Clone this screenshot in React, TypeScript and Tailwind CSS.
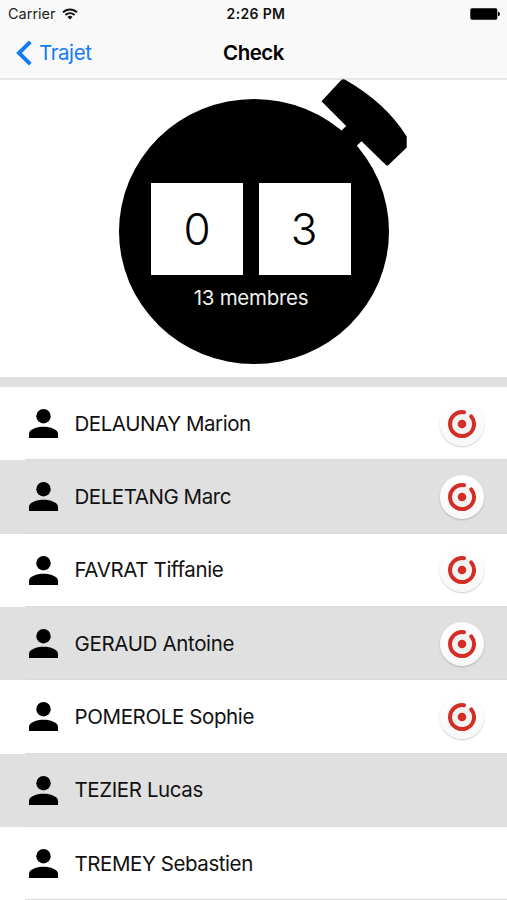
const members = [
  { name: 'DELAUNAY Marion', tracking: 'tracking-[-0.45px]', badge: true },
  { name: 'DELETANG Marc', tracking: 'tracking-[-0.45px]', badge: true },
  { name: 'FAVRAT Tiffanie', tracking: 'tracking-[-0.38px]', badge: true },
  { name: 'GERAUD Antoine', tracking: 'tracking-[-0.35px]', badge: true },
  { name: 'POMEROLE Sophie', tracking: 'tracking-[-0.38px]', badge: true },
  { name: 'TEZIER Lucas', tracking: 'tracking-[-0.4px]', badge: false },
  { name: 'TREMEY Sebastien', tracking: 'tracking-[-0.43px]', badge: false },
];

function StatusBar() {
  return (
    <div className="grid h-[27px] grid-cols-3 items-center pr-[7px] pl-2 text-[#111]">
      <div className="flex items-center gap-[6px]">
        <span className="pt-px text-[14.5px] leading-none text-[#222]">Carrier</span>
        <svg width="16" height="12" viewBox="0 0 16 12" fill="none" stroke="#111" strokeWidth="1.9">
          <path d="M1 4.4 A10 10 0 0 1 15 4.4" />
          <path d="M3.4 7 A6.5 6.5 0 0 1 12.6 7" />
          <path d="M8 11.5 L5.5 9 A3.5 3.5 0 0 1 10.5 9 Z" fill="#111" stroke="none" />
        </svg>
      </div>
      <span className="pl-1 text-center text-[14px] leading-none font-semibold tracking-[0.35px]">2:26 PM</span>
      <svg className="justify-self-end" width="30" height="12" viewBox="0 0 30 12">
        <rect x="0.3" y="0.3" width="27" height="11.4" rx="1.6" />
        <path d="M28 3.8 Q30 4.3 30 6 Q30 7.7 28 8.2Z" />
      </svg>
    </div>
  );
}

function NavBar() {
  return (
    <div className="grid h-[51px] grid-cols-3 items-center px-4 text-[20.5px]">
      <div className="flex items-center gap-[7px] text-[#127cf5]">
        <svg width="16" height="26" viewBox="0 0 16 26" fill="none" stroke="currentColor" strokeWidth="4">
          <path d="M14.3 1.8 L3 13 L14.3 24.2" />
        </svg>
        <span className="pt-px tracking-[-0.4px]">Trajet</span>
      </div>
      <h1 className="pt-px text-center font-semibold tracking-[-0.5px]">Check</h1>
    </div>
  );
}

function Stopwatch() {
  return (
    <section className="relative h-[297px] bg-white">
      <svg className="absolute top-[-1px] left-0" width="507" height="298" viewBox="0 79 507 298">
        <ellipse cx="254" cy="231.5" rx="135" ry="132.5" />
        <path d="M341.5 79.8 Q343.3 78.6 345.2 79.7 Q386 103 406.7 136.5 V147.5 L388.5 165 Q387.3 166 386 165 L361.5 141.2 L356 146.5 L350 158 L330 140 L341.5 130.5 L346.2 126 L321.5 101.3 Z" />
      </svg>
      <div className="relative flex flex-col items-center pt-[103px] pr-[5px]">
        <div className="flex gap-4 text-[44px] leading-none font-[350]">
          <div className="flex h-[92px] w-[92px] items-center justify-center bg-white">0</div>
          <div className="flex h-[92px] w-[92px] items-center justify-center bg-white pr-[2px]">3</div>
        </div>
        <p className="mt-[9px] text-[20.5px] leading-[28px] tracking-[-0.3px] text-[#eee]">13 membres</p>
      </div>
    </section>
  );
}

function PersonIcon() {
  return (
    <svg width="29" height="29" viewBox="0 0 29 29">
      <circle cx="14.5" cy="7.2" r="7.2" />
      <path d="M0 29 V24.8 C0 20.5 7.5 17.8 14.5 17.8 S29 20.5 29 24.8 V29Z" />
    </svg>
  );
}

function Badge() {
  return (
    <span className="mr-[23px] flex h-11 w-11 items-center justify-center rounded-full bg-linear-to-b from-white to-[#f7f7f7] shadow-[0_1px_2px_rgba(0,0,0,0.22)]">
      <svg width="30" height="30" viewBox="0 0 30 30">
        <circle cx="15" cy="15" r="12" fill="#f1f3f3" />
        <path d="M17 3.2 A12 12 0 1 0 24.3 7.4" fill="none" stroke="#d42d26" strokeWidth="4" strokeLinecap="round" />
        <circle cx="15" cy="15" r="4.3" fill="#d42d26" />
      </svg>
    </span>
  );
}

export default function App() {
  return (
    <main className="h-[900px] w-[507px] overflow-hidden bg-white font-['Inter','Liberation_Sans',sans-serif] text-black">
      <header className="h-20 border-b-2 border-[#e6e6e6] bg-[#f9f9f9]">
        <StatusBar />
        <NavBar />
      </header>
      <Stopwatch />
      <div className="h-[10px] bg-[#e0e0e0]" />
      <ul>
        {members.map((m) => (
          <li key={m.name} className="flex h-[73.33px] flex-col odd:bg-white even:bg-[#e0e0e0]">
            <div className="flex flex-1 items-center pt-px pl-[28.5px]">
              <PersonIcon />
              <span className={`ml-[17px] flex-1 pt-px text-[20.5px] text-[#111] ${m.tracking}`}>{m.name}</span>
              {m.badge && <Badge />}
            </div>
            <div className="ml-[25px] h-px bg-[#dadada]" />
          </li>
        ))}
      </ul>
    </main>
  );
}
